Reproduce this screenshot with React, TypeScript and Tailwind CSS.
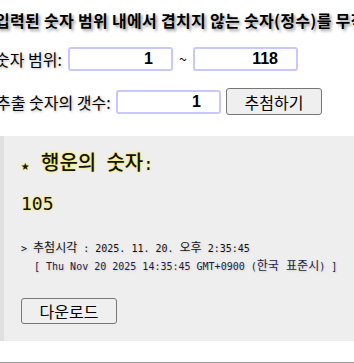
import React from 'react';

const sans = "font-['Noto_Sans_CJK_KR','Liberation_Sans',sans-serif]";
const mono = "font-['DejaVu_Sans_Mono','Noto_Sans_CJK_KR',monospace]";

const NumberBox = ({ value }: { value: string }) => (
    <input
        type="text"
        readOnly
        value={value}
        className="w-[105px] h-[24px] border-2 border-[#c8c8ff] rounded-[3px] bg-white text-right pr-[18px] text-[16px] font-bold text-black font-['Liberation_Sans',Arial,sans-serif] outline-none"
    />
);

const App = () => {
    return (
        <div className="w-full min-h-[363px] overflow-hidden bg-white text-black">
            <div className={`-ml-[5px] ${sans}`}>
                <h3 className="pt-[9px] h-[31px] flex items-center text-[16px] tracking-[0.3px] font-bold whitespace-nowrap [text-shadow:2px_2px_3px_#999]">
                    입력된 숫자 범위 내에서 겹치지 않는 숫자(정수)를 무작위로 추출합니다.
                </h3>

                {/* range */}
                <div className="mt-[16px] flex items-center text-[16px]">
                    <span className="w-[73px] whitespace-nowrap [text-shadow:1px_1px_3px_#aaa]">숫자 범위:</span>
                    <NumberBox value="1" />
                    <span className="w-[20px] text-center text-[14px]">~</span>
                    <NumberBox value="118" />
                </div>

                {/* count */}
                <div className="mt-[17px] h-[27px] flex items-center text-[16px]">
                    <span className="w-[121px] pl-[1px] whitespace-nowrap [text-shadow:1px_1px_3px_#aaa]">추출 숫자의 갯수:</span>
                    <NumberBox value="1" />
                    <button className="ml-[5px] w-[96px] h-[27px] bg-[#efefef] border border-[#767676] rounded-[3px] text-[16px] text-black">
                        추첨하기
                    </button>
                </div>
            </div>

            {/* result */}
            <div className={`mt-[21px] bg-[#eeeeee] border-l-4 border-[#e0e0e0] pl-[17px] pt-[14px] pb-[16px] ${mono}`}>
                <div className="h-[26px] flex items-center">
                    <span className="whitespace-pre text-[17px] font-medium text-[#111] [text-shadow:0_0_3px_#ffee00]">
                        <span className="inline-block w-[20px] text-[14px]">★</span>
                        <span className="text-[20px]">행운의</span>{' '}<span className="text-[20px]">숫자</span>:
                    </span>
                </div>
                <div className="mt-[15px] h-[24px] flex items-center text-[18px] text-[#111] [text-shadow:0_0_3px_#ffee00]">
                    105
                </div>
                <div className="mt-[24px] h-[18px] flex items-center">
                    <span className="whitespace-pre text-[10px] text-[#111] [text-shadow:1px_1px_2px_#ccc]">
                        {'> '}<span className="text-[12px]">추첨시각</span>{' : 2025. 11. 20. '}<span className="text-[12px]">오후</span>{' 2:35:45'}
                    </span>
                </div>
                <div className="h-[18px] pl-[13px] flex items-center">
                    <span className="whitespace-pre text-[10px] text-[#1a1a4a] [text-shadow:1px_1px_2px_#ccc]">
                        {'[ Thu Nov 20 2025 14:35:45 GMT+0900 ('}<span className="text-[12px]">한국 표준시</span>{') ]'}
                    </span>
                </div>
                <button className={`mt-[23px] w-[96px] h-[26px] bg-[#efefef] border border-[#767676] rounded-[3px] text-[16px] text-black ${sans}`}>
                    다운로드
                </button>
            </div>

            <hr className="mt-[21px] border-0 border-t border-[#9a9a9a]" />
        </div>
    );
};

export default App;
